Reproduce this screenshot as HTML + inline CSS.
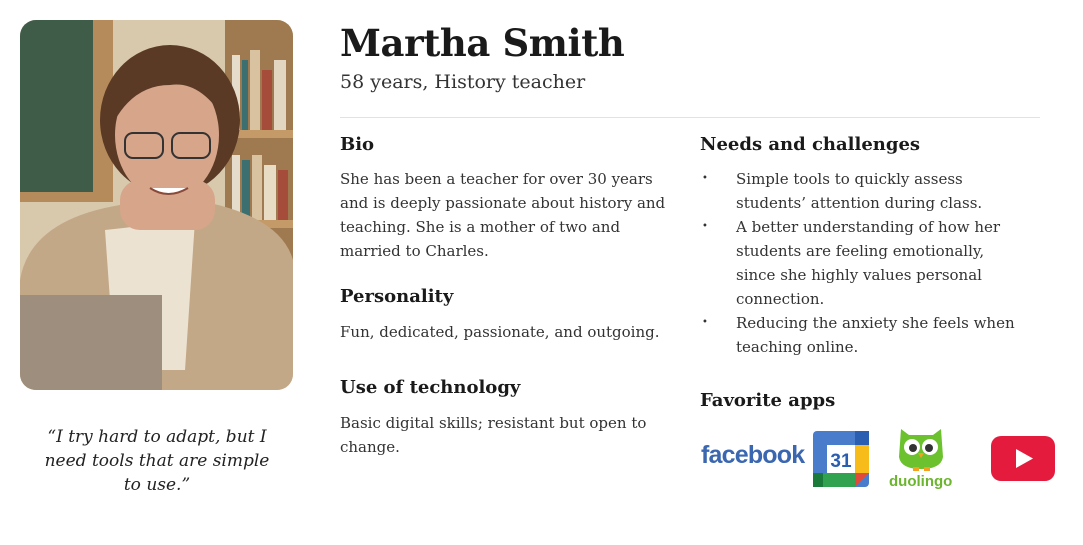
<!DOCTYPE html>
<html><head><meta charset="utf-8"><style>
*{margin:0;padding:0;box-sizing:border-box}
body{width:1083px;height:545px;background:#fff;position:relative;overflow:hidden;font-family:"DejaVu Serif","Liberation Serif",serif;color:#1a1a1a}
.a{position:absolute}
h1{position:absolute;left:340px;top:21px;font-size:37px;font-weight:bold;letter-spacing:-0.4px}
.sub{left:340px;top:71px;font-size:19px;color:#333}
.hr{left:340px;top:117px;width:700px;height:1px;background:#e2e2e2}
h2{position:absolute;font-size:18px;font-weight:bold}
p,.li{font-size:15px;line-height:24px;color:#333}
.li{position:relative;padding-left:36px}
.li:before{content:"•";position:absolute;left:2px;font-size:10px}
.q{left:22px;top:425px;width:270px;text-align:center;font-style:italic;font-size:17px;line-height:24px;color:#222}
</style></head><body>
<div class="a" style="left:20px;top:20px;width:273px;height:370px;border-radius:16px;overflow:hidden;background:#d9c8ac">
<svg width="273" height="370">
<rect width="273" height="370" fill="#d8c9ad"/>
<rect x="0" y="0" width="75" height="175" fill="#3f5c48"/>
<rect x="73" y="0" width="20" height="175" fill="#b58b5c"/>
<rect x="0" y="172" width="93" height="10" fill="#b58b5c"/>
<rect x="205" y="0" width="68" height="330" fill="#9f7a50"/>
<rect x="212" y="35" width="8" height="75" fill="#e6dccb"/><rect x="222" y="40" width="6" height="70" fill="#3c7070"/><rect x="230" y="30" width="10" height="80" fill="#d8c2a0"/><rect x="242" y="50" width="10" height="60" fill="#a54c3a"/><rect x="254" y="40" width="12" height="70" fill="#e3d6c0"/>
<rect x="205" y="110" width="68" height="8" fill="#c49a68"/>
<rect x="212" y="135" width="8" height="65" fill="#e6dccb"/><rect x="222" y="140" width="8" height="60" fill="#3c7070"/><rect x="232" y="135" width="10" height="65" fill="#d8c2a0"/><rect x="244" y="145" width="12" height="55" fill="#e9dcc5"/><rect x="258" y="150" width="10" height="50" fill="#a54c3a"/>
<rect x="205" y="200" width="68" height="8" fill="#c49a68"/>
<path d="M0 260 Q10 200 100 185 L175 180 Q260 195 273 240 L273 370 L0 370Z" fill="#c3a887"/>
<path d="M85 210 L175 200 L165 350 L95 350Z" fill="#ece2d2"/>
<ellipse cx="150" cy="100" rx="70" ry="75" fill="#5a3a25"/>
<ellipse cx="147" cy="115" rx="52" ry="65" fill="#d6a58a"/>
<rect x="100" y="160" width="95" height="50" rx="20" fill="#d6a58a"/>
<path d="M95 100 Q100 40 150 45 Q200 45 205 100 Q180 60 150 65 Q115 65 95 100Z" fill="#5a3a25"/>
<rect x="105" y="113" width="38" height="25" rx="8" fill="none" stroke="#333" stroke-width="2"/>
<rect x="152" y="113" width="38" height="25" rx="8" fill="none" stroke="#333" stroke-width="2"/>
<path d="M130 168 Q148 180 168 168" fill="#fff" stroke="#8a4a3a" stroke-width="2"/>
<rect x="0" y="275" width="142" height="95" fill="#9e8e7d"/>
</svg></div>
<div class="a q">“I try hard to adapt, but I<br>need tools that are simple<br>to use.”</div>
<h1>Martha Smith</h1>
<div class="a sub">58 years, History teacher</div>
<div class="a hr"></div>
<h2 style="left:340px;top:134px">Bio</h2>
<div class="a" style="left:340px;top:167px;width:340px"><p>She has been a teacher for over 30 years and is deeply passionate about history and teaching. She is a mother of two and married to Charles.</p></div>
<h2 style="left:340px;top:286px">Personality</h2>
<div class="a" style="left:340px;top:320px;width:350px"><p>Fun, dedicated, passionate, and outgoing.</p></div>
<h2 style="left:340px;top:377px">Use of technology</h2>
<div class="a" style="left:340px;top:411px;width:340px"><p>Basic digital skills; resistant but open to change.</p></div>
<h2 style="left:700px;top:134px">Needs and challenges</h2>
<div class="a" style="left:700px;top:167px;width:322px">
<div class="li">Simple tools to quickly assess students’ attention during class.</div>
<div class="li">A better understanding of how her students are feeling emotionally, since she highly values personal connection.</div>
<div class="li">Reducing the anxiety she feels when teaching online.</div>
</div>
<h2 style="left:700px;top:390px">Favorite apps</h2>
<div class="a" style="left:701px;top:441px;font-family:'Liberation Sans',sans-serif;font-weight:bold;font-size:25px;color:#3b67b0;letter-spacing:-0.8px">facebook</div>
<svg class="a" style="left:813px;top:431px" width="56" height="56">
<rect x="0" y="0" width="56" height="56" rx="4" fill="#4a7ccc"/>
<rect x="42" y="0" width="14" height="14" fill="#2a5eb0"/>
<rect x="42" y="14" width="14" height="28" fill="#f8bc1a"/>
<rect x="0" y="42" width="42" height="14" fill="#30a250"/>
<rect x="0" y="42" width="10" height="14" fill="#1a7a3a"/>
<path d="M42 42 L56 42 L42 56Z" fill="#e04a3a"/>
<rect x="14" y="14" width="28" height="28" fill="#fff"/>
<text x="28" y="36" text-anchor="middle" font-family="Liberation Sans" font-weight="bold" font-size="19" fill="#2a5eb0">31</text>
</svg>
<svg class="a" style="left:895px;top:427px" width="52" height="45">
<path d="M6 2 L14 8 L38 8 L46 2 L48 30 Q46 42 26 42 Q6 42 4 30Z" fill="#6cc22e"/>
<circle cx="17" cy="20" r="8" fill="#fff"/><circle cx="35" cy="20" r="8" fill="#fff"/>
<circle cx="18" cy="21" r="4" fill="#333"/><circle cx="34" cy="21" r="4" fill="#333"/>
<path d="M23 26 L29 26 L26 31Z" fill="#f4a020"/>
<rect x="18" y="40" width="6" height="4" fill="#f4a020"/><rect x="29" y="40" width="6" height="4" fill="#f4a020"/>
</svg>
<div class="a" style="left:889px;top:473px;font-family:'Liberation Sans',sans-serif;font-weight:bold;font-size:15px;color:#6cb52e">duolingo</div>
<svg class="a" style="left:991px;top:436px" width="64" height="45">
<rect width="64" height="45" rx="10" fill="#e41b3d"/>
<path d="M25 13 L42 22.5 L25 32Z" fill="#fff"/>
</svg>
</body></html>
